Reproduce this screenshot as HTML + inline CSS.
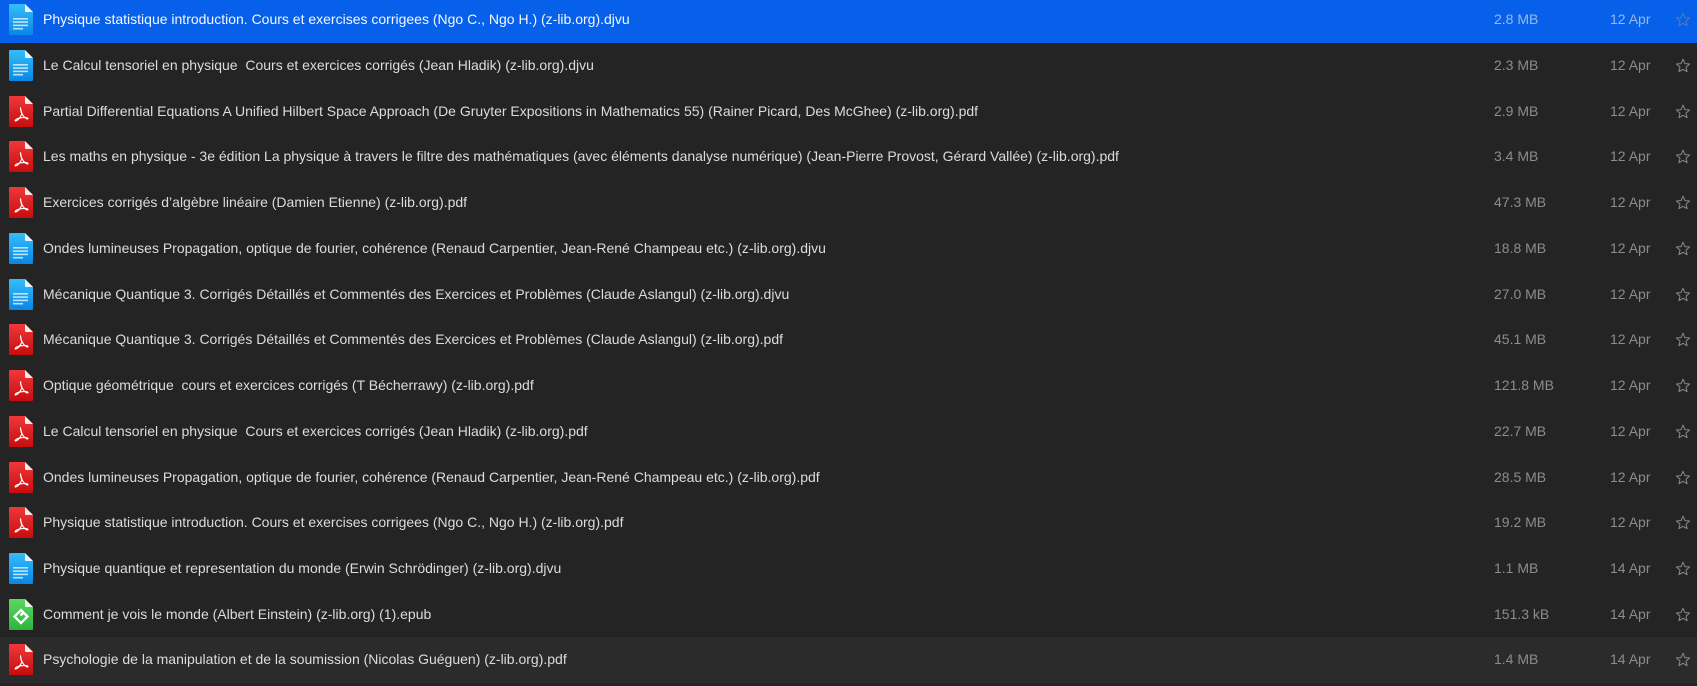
<!DOCTYPE html>
<html><head><meta charset="utf-8"><style>
html,body{margin:0;padding:0;width:1697px;height:686px;overflow:hidden;background:#242424;font-family:"Liberation Sans",Arial,sans-serif;}
.list{position:absolute;top:-2.7px;left:0;width:1697px;}
.row{position:relative;height:45.73px;}
.row.sel{background:#0760ea;}
.row.hov{background:#2b2b2b;}
.row svg.ic{position:absolute;left:9px;top:7px;width:24px;height:31px;}
.name{position:absolute;left:43px;top:0;line-height:45.73px;font-size:14px;color:#dcdcdc;white-space:nowrap;}
.size,.date{position:absolute;top:0;line-height:45.73px;font-size:14px;color:#8c8c8c;white-space:nowrap;}
.size{left:1494px}.date{left:1610px}
.sel .size,.sel .date{color:#9bb7ea}
.sel .name{color:#f4f7ff}
.star{position:absolute;left:1675px;top:15px;width:16px;height:16px;}
</style></head><body>
<svg width="0" height="0" style="position:absolute">
<defs>
<linearGradient id="gb" x1="0" y1="0" x2="0" y2="1"><stop offset="0" stop-color="#35bdf8"/><stop offset="1" stop-color="#0a86e6"/></linearGradient>
<linearGradient id="gr" x1="0" y1="0" x2="0" y2="1"><stop offset="0" stop-color="#f0383a"/><stop offset="1" stop-color="#c70d0d"/></linearGradient>
<linearGradient id="gg" x1="0" y1="0" x2="0" y2="1"><stop offset="0" stop-color="#5ad862"/><stop offset="1" stop-color="#2eb43b"/></linearGradient>
<symbol id="doc" viewBox="0 0 24 31"><path d="M1 0H16L24 8V30a1 1 0 0 1-1 1H1a1 1 0 0 1-1-1V1a1 1 0 0 1 1-1z" fill="url(#gb)"/><path d="M16 0L24 8H17a1 1 0 0 1-1-1z" fill="#e9f6ff"/><g fill="#cdeeff" opacity=".9"><rect x="4" y="14" width="15" height="1.6"/><rect x="4" y="17.3" width="15" height="1.6"/><rect x="4" y="20.6" width="15" height="1.6"/><rect x="4" y="23.9" width="10" height="1.6"/></g></symbol>
<symbol id="pdf" viewBox="0 0 24 31"><path d="M1 0H16L24 8V30a1 1 0 0 1-1 1H1a1 1 0 0 1-1-1V1a1 1 0 0 1 1-1z" fill="url(#gr)"/><path d="M16 0L24 8H17a1 1 0 0 1-1-1z" fill="#fde8e8"/><path d="M12 11.5c-.9 0-.5 3.2.9 6.4-1.3 3-3.6 6.2-5.9 7-1.6.6-1-1.5 1.7-2.4 2.8-.9 8-1.5 9.6-.6 1.6.9.2 1.8-1.8.2-1.6-1.3-3.6-4.2-4.3-6.8-.6-2.4-.8-3.8-.2-3.8z" fill="none" stroke="#fff" stroke-width="1.1"/></symbol>
<symbol id="epub" viewBox="0 0 24 31"><path d="M1 0H16L24 8V30a1 1 0 0 1-1 1H1a1 1 0 0 1-1-1V1a1 1 0 0 1 1-1z" fill="url(#gg)"/><path d="M16 0L24 8H17a1 1 0 0 1-1-1z" fill="#eafbea"/><path d="M14.5 13.5L12 11 5.5 17.5 12 24l6.5-6.5-4-4-3 3" fill="none" stroke="#fff" stroke-width="2.3" stroke-linejoin="miter"/></symbol>
<symbol id="st" viewBox="0 0 16 16"><path d="M8 1.2l1.9 4.4 4.7.4-3.6 3.1 1.1 4.6L8 11.3l-4.1 2.4 1.1-4.6L1.4 6l4.7-.4z" fill="none" stroke="#8a8a8a" stroke-width="1" stroke-linejoin="round"/></symbol>
</defs></svg>
<div class="list">
<div class="row sel"><svg class="ic"><use href="#doc"/></svg><div class="name">Physique statistique introduction. Cours et exercises corrigees (Ngo C., Ngo H.) (z-lib.org).djvu</div><div class="size">2.8 MB</div><div class="date">12 Apr</div><svg class="star"><use href="#st" style="opacity:.6"/></svg></div>
<div class="row"><svg class="ic"><use href="#doc"/></svg><div class="name">Le Calcul tensoriel en physique&nbsp; Cours et exercices corrigés (Jean Hladik) (z-lib.org).djvu</div><div class="size">2.3 MB</div><div class="date">12 Apr</div><svg class="star"><use href="#st"/></svg></div>
<div class="row"><svg class="ic"><use href="#pdf"/></svg><div class="name">Partial Differential Equations A Unified Hilbert Space Approach (De Gruyter Expositions in Mathematics 55) (Rainer Picard, Des McGhee) (z-lib.org).pdf</div><div class="size">2.9 MB</div><div class="date">12 Apr</div><svg class="star"><use href="#st"/></svg></div>
<div class="row"><svg class="ic"><use href="#pdf"/></svg><div class="name">Les maths en physique - 3e édition La physique à travers le filtre des mathématiques (avec éléments danalyse numérique) (Jean-Pierre Provost, Gérard Vallée) (z-lib.org).pdf</div><div class="size">3.4 MB</div><div class="date">12 Apr</div><svg class="star"><use href="#st"/></svg></div>
<div class="row"><svg class="ic"><use href="#pdf"/></svg><div class="name">Exercices corrigés d’algèbre linéaire (Damien Etienne) (z-lib.org).pdf</div><div class="size">47.3 MB</div><div class="date">12 Apr</div><svg class="star"><use href="#st"/></svg></div>
<div class="row"><svg class="ic"><use href="#doc"/></svg><div class="name">Ondes lumineuses Propagation, optique de fourier, cohérence (Renaud Carpentier, Jean-René Champeau etc.) (z-lib.org).djvu</div><div class="size">18.8 MB</div><div class="date">12 Apr</div><svg class="star"><use href="#st"/></svg></div>
<div class="row"><svg class="ic"><use href="#doc"/></svg><div class="name">Mécanique Quantique 3. Corrigés Détaillés et Commentés des Exercices et Problèmes (Claude Aslangul) (z-lib.org).djvu</div><div class="size">27.0 MB</div><div class="date">12 Apr</div><svg class="star"><use href="#st"/></svg></div>
<div class="row"><svg class="ic"><use href="#pdf"/></svg><div class="name">Mécanique Quantique 3. Corrigés Détaillés et Commentés des Exercices et Problèmes (Claude Aslangul) (z-lib.org).pdf</div><div class="size">45.1 MB</div><div class="date">12 Apr</div><svg class="star"><use href="#st"/></svg></div>
<div class="row"><svg class="ic"><use href="#pdf"/></svg><div class="name">Optique géométrique&nbsp; cours et exercices corrigés (T Bécherrawy) (z-lib.org).pdf</div><div class="size">121.8 MB</div><div class="date">12 Apr</div><svg class="star"><use href="#st"/></svg></div>
<div class="row"><svg class="ic"><use href="#pdf"/></svg><div class="name">Le Calcul tensoriel en physique&nbsp; Cours et exercices corrigés (Jean Hladik) (z-lib.org).pdf</div><div class="size">22.7 MB</div><div class="date">12 Apr</div><svg class="star"><use href="#st"/></svg></div>
<div class="row"><svg class="ic"><use href="#pdf"/></svg><div class="name">Ondes lumineuses Propagation, optique de fourier, cohérence (Renaud Carpentier, Jean-René Champeau etc.) (z-lib.org).pdf</div><div class="size">28.5 MB</div><div class="date">12 Apr</div><svg class="star"><use href="#st"/></svg></div>
<div class="row"><svg class="ic"><use href="#pdf"/></svg><div class="name">Physique statistique introduction. Cours et exercises corrigees (Ngo C., Ngo H.) (z-lib.org).pdf</div><div class="size">19.2 MB</div><div class="date">12 Apr</div><svg class="star"><use href="#st"/></svg></div>
<div class="row"><svg class="ic"><use href="#doc"/></svg><div class="name">Physique quantique et representation du monde (Erwin Schrödinger) (z-lib.org).djvu</div><div class="size">1.1 MB</div><div class="date">14 Apr</div><svg class="star"><use href="#st"/></svg></div>
<div class="row"><svg class="ic"><use href="#epub"/></svg><div class="name">Comment je vois le monde (Albert Einstein) (z-lib.org) (1).epub</div><div class="size">151.3 kB</div><div class="date">14 Apr</div><svg class="star"><use href="#st"/></svg></div>
<div class="row hov"><svg class="ic"><use href="#pdf"/></svg><div class="name">Psychologie de la manipulation et de la soumission (Nicolas Guéguen) (z-lib.org).pdf</div><div class="size">1.4 MB</div><div class="date">14 Apr</div><svg class="star"><use href="#st"/></svg></div>
</div>
</body></html>
